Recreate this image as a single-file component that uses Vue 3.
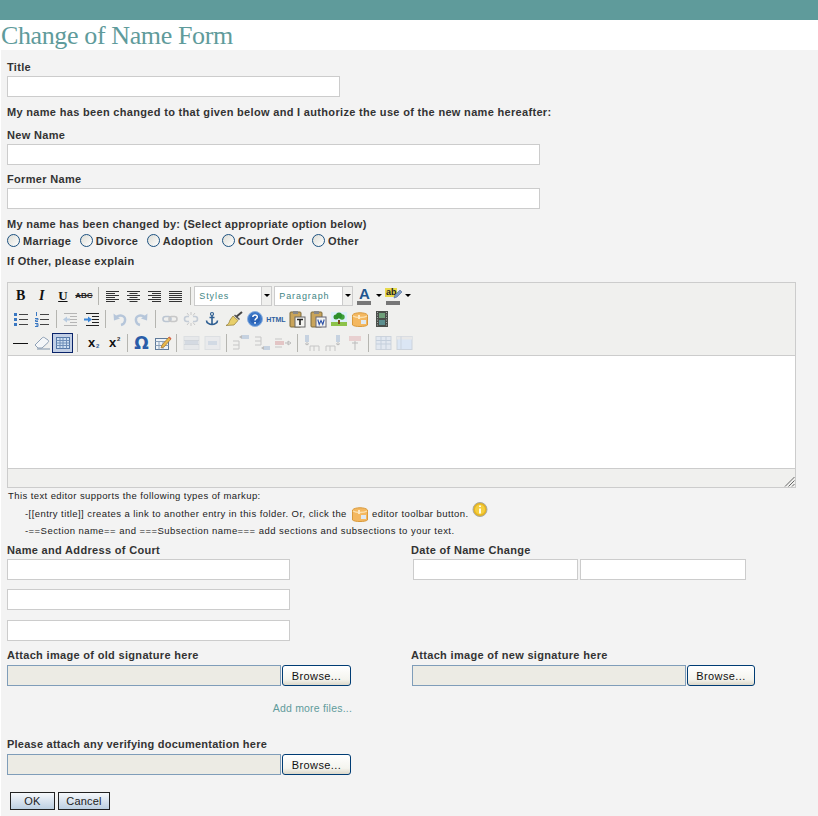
<script setup>
const B = (i, extra = {}) => ({ i, ...extra })
const T = (t, c) => ({ t, c })
const S = { sep: true }
const rows = [
  [T('B', 'tb'), T('I', 'ti'), T('U', 'tu'), T('ABC', 'ts'), S,
   B('al'), B('ac'), B('ar'), B('aj'), S,
   { sel: 'Styles', w: 78 }, { sel: 'Paragraph', w: 79 },
   { color: 'A' }, { color: 'ab' }],
  [B('bul'), B('num'), S, B('out', { off: 1 }), B('ind'), S,
   B('undo', { off: 1 }), B('redo', { off: 1 }), S,
   B('link', { off: 1 }), B('unlink', { off: 1 }), B('anchor'), B('broom'),
   B('help'), T('HTML', 'th'), B('pt'), B('pw'), B('img'), B('box'), B('film')],
  [B('hr'), B('erase'), B('table', { on: 1 }), S, T('x', 'tsub'), T('x', 'tsup'), S,
   T('Ω', 'tom'), B('edit'), S, B('t1', { off: 1 }), B('t2', { off: 1 }), S,
   B('c1', { off: 1 }), B('c2', { off: 1 }), B('c3', { off: 1 }), S,
   B('r1', { off: 1 }), B('r2', { off: 1 }), B('r3', { off: 1 }), S,
   B('g1', { off: 1 }), B('g2', { off: 1 })]
]
const radios = ['Marriage', 'Divorce', 'Adoption', 'Court Order', 'Other']
</script>

<template>
  <svg class="defs" width="0" height="0" aria-hidden="true">
    <symbol id="al" viewBox="0 0 20 20"><path d="M3 5.500h13M3 7.500h9M3 9.500h13M3 11.500h9M3 13.500h13M3 15.500h9" stroke="#333" fill="none"/></symbol>
    <symbol id="ac" viewBox="0 0 20 20"><path d="M3 5.500h13M5.500 7.500h8M3 9.500h13M5.500 11.500h8M3 13.500h13M5.500 15.500h8" stroke="#333" fill="none"/></symbol>
    <symbol id="ar" viewBox="0 0 20 20"><path d="M3 5.500h13M7 7.500h9M3 9.500h13M7 11.500h9M3 13.500h13M7 15.500h9" stroke="#333" fill="none"/></symbol>
    <symbol id="aj" viewBox="0 0 20 20"><path d="M3 5.500h13M3 7.500h13M3 9.500h13M3 11.500h13M3 13.500h13M3 15.500h13" stroke="#333" fill="none"/></symbol>
    <symbol id="bul" viewBox="0 0 20 20"><path d="M8 5.500h9M8 10.500h9M8 15.500h9" stroke="#444" fill="none"/><path d="M3 4h3v3H3zM3 9h3v3H3zM3 14h3v3H3z" fill="#3a78c2"/></symbol>
    <symbol id="num" viewBox="0 0 20 20"><path d="M8 5.500h9M8 10.500h9M8 15.500h9" stroke="#444" fill="none"/><path d="M4.500 3v4M3 9.500h3v1.500H3.500v1.500H6M3 14.500h3v3H3M4 16h2" stroke="#3a78c2" fill="none"/></symbol>
    <symbol id="out" viewBox="0 0 20 20"><path d="M4 4.500h13M10 7.500h7M10 10.500h7M10 13.500h7M4 16.500h13" stroke="#b5b5b5" fill="none"/><path d="M3 10.500l4-3v2h3v2H7v2z" fill="#b8cbe0"/></symbol>
    <symbol id="ind" viewBox="0 0 20 20"><path d="M4 4.500h13M10 7.500h7M10 10.500h7M10 13.500h7M4 16.500h13" stroke="#222" stroke-width="1.200" fill="none"/><path d="M10 10.500l-4-3v2H2v2h4v2z" fill="#3a86d8"/></symbol>
    <symbol id="undo" viewBox="0 0 20 20"><path d="M6 8c5-3 10-1 9 4-.4 2-2 3.500-4 4" stroke="#b6c6da" stroke-width="2.400" fill="none"/><path d="M3.500 4.500l.5 7 6-2z" fill="#b6c6da"/></symbol>
    <symbol id="redo" viewBox="0 0 20 20"><path d="M14 8c-5-3-10-1-9 4 .4 2 2 3.500 4 4" stroke="#b6c6da" stroke-width="2.400" fill="none"/><path d="M16.500 4.500l-.5 7-6-2z" fill="#b6c6da"/></symbol>
    <symbol id="link" viewBox="0 0 20 20"><rect x="3" y="7.500" width="8" height="5" rx="2.500" stroke="#bcc6d2" stroke-width="1.600" fill="none"/><rect x="9" y="7.500" width="8" height="5" rx="2.500" stroke="#c8c8c8" stroke-width="1.600" fill="none"/></symbol>
    <symbol id="unlink" viewBox="0 0 20 20"><path d="M8 7.500H6a2.500 2.500 0 0 0 0 5h2M12 7.500h2a2.500 2.500 0 0 1 0 5h-2" stroke="#c4ccd6" stroke-width="1.600" fill="none"/><path d="M10 3v3M10 14v3M6 4l2 2.500M14 4l-2 2.500M6 16l2-2.500M14 16l-2-2.500" stroke="#c8c8c8" fill="none"/></symbol>
    <symbol id="anchor" viewBox="0 0 20 20"><circle cx="10" cy="5" r="1.500" stroke="#2f5f92" stroke-width="1.200" fill="none"/><path d="M10 6.500V15.500M7.500 8.500h5M4.500 11.500c0 2.500 3 4 5.500 4s5.500-1.500 5.500-4" stroke="#2f5f92" stroke-width="1.600" fill="none"/></symbol>
    <symbol id="broom" viewBox="0 0 20 20"><path d="M12 8l6-5" stroke="#444" stroke-width="2" fill="none"/><path d="M9 7l5 4.500-4 4.500-8 .5c3-1.500 3-3 4-5.500z" fill="#e8cf6a" stroke="#8f7a35" stroke-width=".7"/><path d="M10.500 6l5 4.500" stroke="#555" stroke-width="1.500"/></symbol>
    <symbol id="help" viewBox="0 0 20 20"><circle cx="10" cy="10" r="7.500" fill="#3c78c8" stroke="#8db0df"/><circle cx="10" cy="10" r="5" fill="#2a62b6"/><path d="M7.800 8c.3-2.800 4.600-2.600 4.500 0 0 1.800-2.300 1.600-2.300 3.500" stroke="#fff" stroke-width="1.500" fill="none"/><path d="M9.200 13h1.700v1.700H9.200z" fill="#fff"/></symbol>
    <symbol id="pt" viewBox="0 0 20 20"><rect x="3" y="3" width="11" height="15" rx="1" fill="#c9a45a" stroke="#7d6a3a"/><rect x="6" y="2" width="5" height="3" fill="#888"/><rect x="8" y="8" width="10" height="10" fill="#f4f4f0" stroke="#666"/><path d="M10 10.500h6M13 10.500V16" stroke="#222" stroke-width="1.600"/></symbol>
    <symbol id="pw" viewBox="0 0 20 20"><rect x="3" y="3" width="11" height="15" rx="1" fill="#c9a45a" stroke="#7d6a3a"/><rect x="6" y="2" width="5" height="3" fill="#888"/><rect x="8" y="8" width="10" height="10" fill="#f4f4f0" stroke="#667"/><path d="M9.800 10.500l1.400 5 1.800-4 1.800 4 1.400-5" stroke="#2a4fa8" stroke-width="1.100" fill="none"/></symbol>
    <symbol id="img" viewBox="0 0 20 20"><rect x="2" y="3" width="16" height="14" fill="#dbeefb"/><rect x="2" y="13" width="16" height="4" fill="#8cc24a"/><path d="M9 11h2v4H9z" fill="#7b4a1e"/><circle cx="7" cy="8" r="2.500" fill="#2f8f2f"/><circle cx="13" cy="8" r="2.700" fill="#3ea13a"/><circle cx="10" cy="6.500" r="3" fill="#2c8f2c"/></symbol>
    <symbol id="box" viewBox="0 0 20 20"><path d="M2.500 6c2-3 13-3 15 0v10c-2 2-13 2-15 0z" fill="#f4b860" stroke="#d99a3c"/><path d="M3 7c3 2 11 2 14 0" stroke="#fbe0ad" stroke-width="1.500" fill="none"/><path d="M11 11h5v4h-5z" fill="#dfe9f2"/><path d="M9 6v4" stroke="#fde9c5" stroke-width="2"/></symbol>
    <symbol id="film" viewBox="0 0 20 20"><rect x="4" y="2" width="12" height="16" fill="#4a4f4a"/><rect x="7" y="4" width="6" height="5" fill="#6fa07a"/><rect x="7" y="11" width="6" height="5" fill="#5c8f8f"/><path d="M5.500 3v14M14.500 3v14" stroke="#aaa" stroke-dasharray="1 1.500"/></symbol>
    <symbol id="hr" viewBox="0 0 20 20"><path d="M2 10.500h15" stroke="#111" fill="none"/></symbol>
    <symbol id="erase" viewBox="0 0 20 20"><path d="M3 12l7-7c1-1 2-1 3 0l3 2c.8.8.8 1.500 0 2.500L10 15H6z" fill="#f4f6f8" stroke="#8ea0b5"/><path d="M5 16h13" stroke="#7f93aa"/></symbol>
    <symbol id="table" viewBox="0 0 20 20"><rect x="3.500" y="4.500" width="13" height="11" fill="#cfe0f2" stroke="#5578a8"/><path d="M3.500 7.500h13M3.500 10h13M3.500 12.500h13M7 4.500v11M10 4.500v11M13.500 4.500v11" stroke="#6f8eb8" fill="none"/></symbol>
    <symbol id="edit" viewBox="0 0 20 20"><rect x="2.500" y="5.500" width="13" height="11" fill="#eef3f8" stroke="#5f7a99"/><path d="M2.500 8.500h13M6 8.500v8M10 8.500v8M2.500 12.500h13" stroke="#8aa0ba"/><path d="M9 12l7-8 2 2-7 8-3 1z" fill="#e8b94c" stroke="#a4702c" stroke-width=".7"/><path d="M15.500 4.500l1-1 2 2-1 1z" fill="#d9604a"/></symbol>
    <symbol id="t1" viewBox="0 0 20 20"><rect x="3" y="3.500" width="15" height="13" fill="#e6e8ea" stroke="#dcdfe2"/><path d="M3 7.500h15M3 11.500h15" stroke="#d0d5db"/><rect x="4" y="8" width="13" height="3" fill="#d4dae2"/></symbol>
    <symbol id="t2" viewBox="0 0 20 20"><rect x="3" y="3.500" width="15" height="13" fill="#e9eaec" stroke="#dcdfe2"/><rect x="6" y="8" width="9" height="4" fill="#d2dae4"/></symbol>
    <symbol id="c1" viewBox="0 0 20 20"><path d="M2 8h6M2 12h6M2 16h6M8 8v8" stroke="#c6c6c6" fill="none"/><path d="M8 4l3-2v4z" fill="#bbb"/><rect x="11" y="2" width="7" height="4" fill="#c6d2e0"/></symbol>
    <symbol id="c2" viewBox="0 0 20 20"><path d="M3 4h6M3 8h6M3 12h6M9 4v8" stroke="#c6c6c6" fill="none"/><path d="M9 15l3-2v4z" fill="#bbb"/><rect x="12" y="13" width="6" height="4" fill="#c6d2e0"/></symbol>
    <symbol id="c3" viewBox="0 0 20 20"><path d="M2 6h7M2 14h7" stroke="#c6c6c6" fill="none"/><rect x="2" y="8" width="9" height="4" fill="#e3c5c5"/><path d="M12 10h4M15 8l3 2-3 2z" stroke="#bbb" fill="none"/></symbol>
    <symbol id="r1" viewBox="0 0 20 20"><rect x="3" y="2" width="4" height="7" fill="#c6d2e0"/><path d="M5 9v3l-2-1.500M5 12l2-1.500" stroke="#bbb" fill="none"/><path d="M8 18v-5h4v5M12 13h5v5" stroke="#c6c6c6" fill="none"/></symbol>
    <symbol id="r2" viewBox="0 0 20 20"><rect x="13" y="2" width="4" height="7" fill="#c6d2e0"/><path d="M15 9v3l-2-1.500M15 12l2-1.500" stroke="#bbb" fill="none"/><path d="M3 18v-5h4v5M7 13h5v5" stroke="#c6c6c6" fill="none"/></symbol>
    <symbol id="r3" viewBox="0 0 20 20"><path d="M4 3h12v5H4z" fill="#e8d0d0"/><path d="M10 8v9M7 10h6" stroke="#bbb" fill="none"/></symbol>
    <symbol id="g1" viewBox="0 0 20 20"><rect x="3" y="3.500" width="15" height="13" fill="#e2e8f0" stroke="#ccd3dc"/><path d="M3 7.500h15M3 11h15M8 3.500v13M13 3.500v13" stroke="#c4cfdc"/></symbol>
    <symbol id="g2" viewBox="0 0 20 20"><rect x="3" y="3.500" width="15" height="13" fill="#dbe6f4" stroke="#ccd3dc"/><rect x="3" y="3.500" width="15" height="3" fill="#e8e8e8"/><path d="M7 3.500v13" stroke="#cbd4df"/></symbol>
    <symbol id="info" viewBox="0 0 16 16"><circle cx="8" cy="7.500" r="7" fill="#e6b422" stroke="#a9a9a0"/><circle cx="8" cy="7.500" r="5" fill="#f5cf3f"/><path d="M8 3.500v1.600M8 6.500v5" stroke="#fff" stroke-width="1.800"/></symbol>
    <symbol id="pen" viewBox="0 0 10 10"><path d="M1 9l1-3 5-5 2 2-5 5z" fill="#7f9cc4" stroke="#4a6a96" stroke-width=".6"/></symbol>
  </svg>

  <div class="topbar"></div>
  <h1 class="title">Change of Name Form</h1>

  <form class="page" @submit.prevent>
    <label class="lbl first">Title</label>
    <input class="txt w333 m2" type="text" />

    <p class="lbl m8">My name has been changed to that given below and I authorize the use of the new name hereafter:</p>

    <label class="lbl m9">New Name</label>
    <input class="txt w533 m2" type="text" />

    <label class="lbl m7">Former Name</label>
    <input class="txt w533 m2" type="text" />

    <p class="lbl m8 tight">My name has been changed by: (Select appropriate option below)</p>
    <div class="radios">
      <label v-for="r in radios" :key="r" class="radio"><input type="radio" name="by" /><span>{{ r }}</span></label>
    </div>
    <p class="lbl m6">If Other, please explain</p>

    <div class="editor">
      <div class="toolbar">
        <div v-for="(row, ri) in rows" :key="ri" class="tbrow">
          <template v-for="(it, k) in row" :key="k">
            <span v-if="it.sep" class="sep"></span>
            <span v-else-if="it.sel" class="sel" :style="{ width: it.w + 'px' }"><span class="seltxt">{{ it.sel }}</span><span class="selarr"><i class="caret"></i></span></span>
            <span v-else-if="it.color" class="colorbtn">
              <span class="colorface"><span :class="it.color === 'A' ? 'ca' : 'cab'">{{ it.color }}</span><svg v-if="it.color !== 'A'" class="penic" width="10" height="10"><use href="#pen" /></svg><span class="cbar"></span></span><i class="caret"></i>
            </span>
            <span v-else-if="it.t" class="btn"><span :class="it.c">{{ it.t }}</span></span>
            <span v-else class="btn" :class="{ on: it.on, off: it.off }"><svg width="20" height="20"><use :href="'#' + it.i" /></svg></span>
          </template>
        </div>
      </div>
      <div class="area"></div>
      <div class="status"><svg class="grip" width="11" height="11" viewBox="0 0 11 11"><path d="M10.500 1L1 10.500M10.500 4.500L4.500 10.500M10.500 8L8 10.500" stroke="#666" fill="none"/></svg></div>
    </div>

    <div class="help">
      <div class="h1">This text editor supports the following types of markup:</div>
      <div class="h2">-[[entry title]] creates a link to another entry in this folder. Or, click the <svg class="hbox" width="20" height="20"><use href="#box" /></svg> editor toolbar button. <svg class="hinfo" width="16" height="16"><use href="#info" /></svg></div>
      <div class="h3">-==Section name== and ===Subsection name=== add sections and subsections to your text.</div>
    </div>

    <div class="cols top">
      <div class="col">
        <label class="lbl">Name and Address of Court</label>
        <input class="txt w283 m2" type="text" />
        <input class="txt w283 m9b" type="text" />
        <input class="txt w283 m10b" type="text" />
      </div>
      <div class="col">
        <label class="lbl">Date of Name Change</label>
        <div class="dates">
          <input class="txt d1" type="text" />
          <input class="txt d2" type="text" />
        </div>
      </div>
    </div>

    <div class="cols attach">
      <div class="col">
        <label class="lbl">Attach image of old signature here</label>
        <div class="file"><input class="path" type="text" readonly /><button class="browse" type="button">Browse...</button></div>
      </div>
      <div class="col">
        <label class="lbl">Attach image of new signature here</label>
        <div class="file right"><input class="path" type="text" readonly /><button class="browse b2" type="button">Browse...</button></div>
      </div>
    </div>

    <div class="more"><a href="#" @click.prevent>Add more files...</a></div>

    <label class="lbl m22 tighter">Please attach any verifying documentation here</label>
    <div class="file"><input class="path" type="text" readonly /><button class="browse" type="button">Browse...</button></div>

    <div class="actions">
      <button class="act ok" type="submit">OK</button>
      <button class="act cancel" type="button">Cancel</button>
    </div>
  </form>
</template>

<style>
html, body { margin: 0; background: #fff; }
</style>

<style scoped>
.defs { position: absolute; }
.topbar { height: 20px; background: #5f9b9b; }
.title {
  margin: 0; height: 30px; padding-left: 1px;
  font: normal 26px/32px "Liberation Serif", serif;
  color: #5f9b9b; letter-spacing: -0.38px; background: #fff; box-sizing: border-box;
}
.page {
  display: block; margin-left: 1px; padding: 10px 0 0 6px; min-height: 766px; box-sizing: border-box;
  background: #f3f3f3; color: #333;
  font-family: "Liberation Sans", Arial, sans-serif;
}
.lbl { display: block; margin: 0; font-size: 11px; line-height: 14px; font-weight: 700; letter-spacing: 0.32px; color: #333; }
.tight { letter-spacing: 0.27px; }
.tighter { letter-spacing: 0.23px; }
.m6 { margin-top: 6px; } .m7 { margin-top: 7px; } .m8 { margin-top: 8px; } .m9 { margin-top: 9px; }
.m22 { margin-top: 22px; }
.txt { display: block; box-sizing: border-box; height: 21px; padding: 0; border: 1px solid #ccc; background: #fff; outline: none; }
.m2 { margin-top: 2px; } .m9b { margin-top: 9px; } .m10b { margin-top: 10px; }
.w333 { width: 333px; } .w533 { width: 533px; } .w283 { width: 283px; }

.radios { display: flex; margin-top: 3px; height: 14px; }
.radio { display: flex; align-items: center; margin-right: 8.500px; font-size: 11px; font-weight: 700; letter-spacing: 0.3px; line-height: 14px; }
.radio input {
  appearance: none; box-sizing: border-box; width: 13px; height: 13px; margin: 0 3px 0 0; position: relative; top: -1px;
  border: 1px solid #1c5180; border-radius: 50%; background: linear-gradient(135deg, #dcdcd5, #fff);
}

.editor { margin-top: 14px; width: 789px; box-sizing: border-box; border: 1px solid #ccc; background: #f0f0ee; }
.toolbar { height: 72px; padding: 1px 0 0 2px; box-sizing: border-box; }
.tbrow { display: flex; align-items: center; height: 23.500px; }
.btn { flex: none; width: 21.150px; height: 20px; display: flex; align-items: center; justify-content: center; box-sizing: border-box; }
.btn svg { display: block; flex: none; }
.btn.on { background: #c2cfe5; border: 1px solid #0a246a; }
.btn.on svg { margin: -1px; }
.sep { flex: none; width: 1px; height: 18px; margin: 0 3.300px; background: #b5b5b0; }
.tb { font: 700 14px "Liberation Serif", serif; color: #111; }
.ti { font: italic 700 14px "Liberation Serif", serif; color: #111; }
.tu { font: 700 13px "Liberation Serif", serif; color: #111; text-decoration: underline; }
.ts { font: 700 8px "Liberation Sans", sans-serif; color: #222; text-decoration: line-through; }
.th { font: 700 7px "Liberation Sans", sans-serif; color: #2f5f9e; }
.tsub, .tsup { font: 700 13px "Liberation Sans", sans-serif; color: #111; position: relative; }
.tsub::after { content: "2"; position: absolute; left: 8px; top: 8px; font-size: 6px; color: #2f5f9e; }
.tsup::after { content: "2"; position: absolute; left: 8px; top: 1px; font-size: 6px; color: #333; }
.tom { font: 700 17px "DejaVu Sans", sans-serif; color: #2a5ca8; }
.sel { flex: none; display: flex; height: 20px; box-sizing: border-box; border: 1px solid #ccc; margin-right: 2px; background: #fff; }
.seltxt { flex: 1; padding-left: 4px; font: 9px/18px "Liberation Sans", sans-serif; letter-spacing: 0.9px; color: #3f8585; }
.selarr { width: 9px; background: #f0f0ee; border-left: 1px solid #ccc; display: flex; align-items: center; justify-content: center; }
.caret { display: block; flex: none; width: 0; height: 0; border: 3px solid transparent; border-top: 3px solid #000; border-bottom: 0; }
.colorbtn { flex: none; display: flex; align-items: center; width: 29px; padding-left: 1px; box-sizing: border-box; }
.colorbtn .caret { margin-left: 4px; }
.colorface { width: 16px; height: 20px; position: relative; display: block; text-align: center; }
.ca { font: 700 15px/15px "Liberation Sans", sans-serif; color: #20568f; display: block; }
.cab { font: 700 9px/9px "Liberation Sans", sans-serif; color: #222; background: #e7d94a; display: block; width: 12px; margin-top: 2px; }
.penic { position: absolute; right: -2px; top: 3px; }
.cbar { position: absolute; left: 1px; right: 1px; bottom: 1px; height: 4px; background: #777; }
.area { height: 112px; background: #fff; border-top: 1px solid #ccc; border-bottom: 1px solid #ccc; }
.status { height: 18px; position: relative; background: #f0f0ee; }
.grip { position: absolute; right: 0; bottom: 0; }

.help { font-size: 9.500px; color: #222; padding: 1px 0 0 1px; }
.h1 { line-height: 14px; height: 14px; letter-spacing: 0.41px; }
.h2 { display: flex; align-items: center; height: 15px; margin-top: 3px; padding-left: 17px; white-space: pre; letter-spacing: 0.43px; }
.hbox { margin: 0 -1px 0 0; }
.hinfo { margin: -8px 0 0 0; }
.h3 { height: 14px; line-height: 14px; margin-top: 3px; padding-left: 17px; letter-spacing: 0.45px; }

.cols { display: flex; }
.top { margin-top: 5px; }
.col { width: 404px; flex: none; }
.dates { display: flex; margin: 2px 0 0 2px; gap: 2px; }
.d1 { width: 165px; } .d2 { width: 166px; }
.attach { margin-top: 7px; }
.file { display: flex; margin-top: 3px; height: 21px; }
.right { margin-left: 1px; }
.path { box-sizing: border-box; width: 274px; height: 21px; padding: 0; border: 1px solid #7f9db9; background: #ecebe4; outline: none; }
.browse {
  box-sizing: border-box; width: 69px; height: 21px; margin-left: 1px; padding: 0;
  border: 1px solid #003c74; border-radius: 3px; background: linear-gradient(#fff, #f4f4ee 70%, #dcd8ca);
  font: 11px "Liberation Sans", sans-serif; letter-spacing: 0.4px; color: #111;
}
.b2 { width: 68px; }
.more { margin-top: 15px; width: 345px; text-align: right; font-size: 10.500px; line-height: 14px; letter-spacing: 0.2px; }
.more a { color: #5f9b9b; text-decoration: none; }
.actions { display: flex; gap: 3px; margin: 17px 0 0 3px; }
.act {
  box-sizing: border-box; height: 18px; padding: 0;
  border: 1px solid #222; background: linear-gradient(#f6f8fb, #bccfe2);
  font: 11px "Liberation Sans", sans-serif; color: #222; letter-spacing: 0.2px;
}
.ok { width: 45px; } .cancel { width: 52px; }
</style>
